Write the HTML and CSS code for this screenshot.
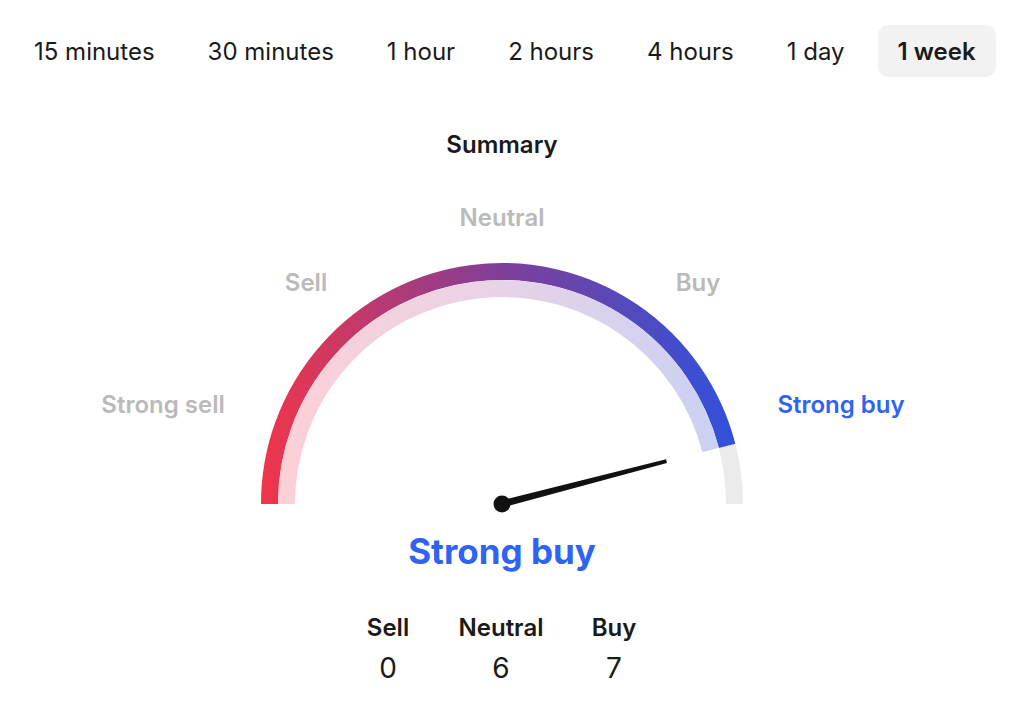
FILE: index.html
```html
<!DOCTYPE html>
<html lang="en">
<head>
  <meta charset="UTF-8" />
  <meta name="viewport" content="width=device-width, initial-scale=1.0" />
  <title>Technical summary</title>
  <link rel="stylesheet" href="styles.css">
</head>

<body>
  <div class="tabs">
    <div class="tab">15 minutes</div>
    <div class="tab">30 minutes</div>
    <div class="tab">1 hour</div>
    <div class="tab">2 hours</div>
    <div class="tab">4 hours</div>
    <div class="tab">1 day</div>
    <div class="tab active">1 week</div>
  </div>

  <div class="summary">
    <h2 class="title">Summary</h2>

    <div class="gauge">
      <svg class="gauge-svg" width="1004" height="340" viewBox="0 0 1004 340">
        <defs>
          <linearGradient id="ring" gradientUnits="userSpaceOnUse" x1="260" y1="0" x2="743" y2="0">
            <stop offset="0" stop-color="#f1354a" />
            <stop offset="0.5" stop-color="#7f3f99" />
            <stop offset="1" stop-color="#2d52de" />
          </linearGradient>
          <linearGradient id="ring-light" gradientUnits="userSpaceOnUse" x1="260" y1="0" x2="743" y2="0">
            <stop offset="0" stop-color="#ffcfd5" />
            <stop offset="0.5" stop-color="#e7d3e7" />
            <stop offset="1" stop-color="#c8d0f5" />
          </linearGradient>
        </defs>
        <!-- outer track, value part and rest -->
        <path d="M727.1 265.8 A232.5 232.5 0 0 1 734.5 324" fill="none" stroke="#ebebeb" stroke-width="17" />
        <path d="M269.5 324 A232.5 232.5 0 0 1 727.1 265.8" fill="none" stroke="url(#ring)" stroke-width="17" />
        <path d="M286.5 324 A215.5 215.5 0 0 1 710.6 270" fill="none" stroke="url(#ring-light)" stroke-width="17" />
        <!-- needle -->
        <polygon points="502.9,327.4 501.1,320.6 666.1,279.2 666.9,283" fill="#111" />
        <circle cx="502" cy="324" r="8.5" fill="#111" />
      </svg>

      <span class="mark neutral">Neutral</span>
      <span class="mark sell">Sell</span>
      <span class="mark buy">Buy</span>
      <span class="mark strong-sell">Strong sell</span>
      <span class="mark strong-buy current">Strong buy</span>
    </div>

    <div class="result">Strong buy</div>

    <div class="counts">
      <div class="count">
        <span class="count-label">Sell</span>
        <span class="count-value">0</span>
      </div>
      <div class="count">
        <span class="count-label">Neutral</span>
        <span class="count-value">6</span>
      </div>
      <div class="count">
        <span class="count-label">Buy</span>
        <span class="count-value">7</span>
      </div>
    </div>
  </div>
</body>
</html>
```

FILE: styles.css
```css
  :root {
    --text: #1a1a1a;
    --muted: #bababa;
    --accent: #2f63f2;
  }

  body {
    margin: 0;
    font-family: Inter, 'Noto Sans', sans-serif;
    color: var(--text);
    background: #ffffff;
  }

  .tabs {
    display: flex;
    gap: 13px;
    padding: 25px 0 0 14px;
  }

  .tab {
    padding: 0 20px;
    height: 52px;
    line-height: 53px;
    border-radius: 10px;
    font-size: 24px;
    white-space: nowrap;
  }

  .tab.active {
    background: #f2f2f2;
    font-weight: 600;
  }

  .summary {
    display: flex;
    flex-direction: column;
    align-items: center;
    padding-right: 20px;
  }

  .title {
    margin: 53px 0 0;
    font-size: 24px;
    font-weight: 600;
    line-height: 30px;
  }

  .gauge {
    position: relative;
    width: 1004px;
    height: 340px;
    margin-top: 20px;
  }

  .gauge-svg {
    display: block;
  }

  .mark {
    position: absolute;
    transform: translate(-50%, -50%);
    font-size: 24px;
    font-weight: 600;
    color: var(--muted);
    white-space: nowrap;
  }

  .mark.current {
    color: var(--accent);
  }

  .neutral { left: 502px; top: 37px; }
  .sell { left: 306px; top: 102px; }
  .buy { left: 698px; top: 102px; }
  .strong-sell { left: 163px; top: 224px; }
  .strong-buy { left: 841px; top: 224px; }

  .result {
    margin-top: 9px;
    font-size: 35px;
    font-weight: 700;
    color: var(--accent);
    line-height: 44px;
  }

  .counts {
    display: grid;
    grid-template-columns: repeat(3, 113px);
    margin-top: 40px;
    margin-left: -2px;
  }

  .count {
    display: flex;
    flex-direction: column;
    align-items: center;
  }

  .count-label {
    font-size: 24px;
    font-weight: 600;
    line-height: 30px;
  }

  .count-value {
    font-size: 28px;
    line-height: 36px;
    margin-top: 7px;
  }
```
